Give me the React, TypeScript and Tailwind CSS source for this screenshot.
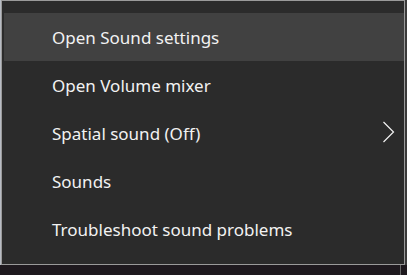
import React from "react";

const items = [
  { label: "Open Sound settings", hover: true },
  { label: "Open Volume mixer" },
  { label: "Spatial sound (Off)", sub: true },
  { label: "Sounds" },
  { label: "Troubleshoot sound problems" },
];

export default function App() {
  return (
    <div
      className="relative w-[407px] h-[275px] overflow-hidden bg-[#1e191e]"
      style={{ fontFamily: '"Noto Sans", "Open Sans", sans-serif' }}
    >
      <div className="absolute left-0 top-0 w-[1px] h-[265px] bg-[#b8bcc4]" />
      <div className="absolute left-[405px] top-0 w-[2px] h-[265px] bg-[#3a3a3a]" />
      <div className="absolute left-[400px] top-[265px] w-[1px] h-[10px] bg-[#6a6a6a]" />
      <div className="ml-[1px] w-[404px] h-[265px] border border-[#9a9a9a] bg-[#2b2b2b] pt-[12px] pl-[2px]">
        {items.map((it) => (
          <div
            key={it.label}
            className={`relative flex items-center h-[48px] pl-[48px] text-[17px] text-[#f2f2f2] ${
              it.hover ? "bg-[#414141]" : ""
            }`}
          >
            <span className="leading-none">{it.label}</span>
            {it.sub && (
              <svg
                className="absolute left-[377px] top-[12px]"
                width="14"
                height="24"
                viewBox="0 0 14 24"
                fill="none"
              >
                <path d="M2.5 1 L12.5 11 L2.5 21" stroke="#f2f2f2" strokeWidth="1.2" />
              </svg>
            )}
          </div>
        ))}
      </div>
    </div>
  );
}
